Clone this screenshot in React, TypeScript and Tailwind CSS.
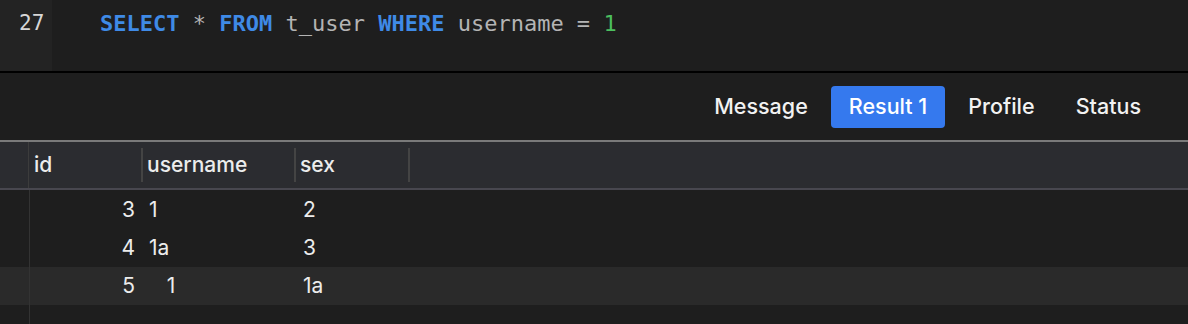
import React from 'react';

const mono = { fontFamily: '"DejaVu Sans Mono", monospace' };

const tabs = ['Message', 'Result 1', 'Profile', 'Status'];

const rows = [
  { id: '3', username: '1', sex: '2' },
  { id: '4', username: '1a', sex: '3' },
  { id: '5', username: '\u00a0\u00a0\u00a01', sex: '1a' },
];

const App: React.FC = () => {
  return (
    <div className="w-[1188px] h-[324px] bg-[#1e1e1e] overflow-hidden font-['Inter',sans-serif] text-[#ececec]">
      {/* editor */}
      <div className="flex h-[71px]">
        <div className="w-[52px] bg-[#232323] text-[#d6d6d6] text-[21px] pt-[8px] pl-[19px]" style={mono}>27</div>
        <div className="flex-1 pl-[48px] pt-[7px] text-[22px] whitespace-pre text-[#b4b4b4]" style={mono}>
          <span className="text-[#3f8ae6] font-bold">SELECT</span> * <span className="text-[#3f8ae6] font-bold">FROM</span> t_user{' '}
          <span className="text-[#3f8ae6] font-bold">WHERE</span> username = <span className="text-[#4cbf5e]">1</span>
        </div>
      </div>
      <div className="h-[2px] bg-black" />

      {/* tabs */}
      <div className="flex justify-end items-center h-[67px] pr-[29px] gap-[5px]">
        {tabs.map((t) => (
          <div
            key={t}
            className={`h-[42px] px-[18px] flex items-center text-[21.5px] font-medium rounded-[4px] ${
              t === 'Result 1' ? 'bg-[#3579ee] text-white' : 'text-[#f2f2f2]'
            }`}
          >
            {t}
          </div>
        ))}
      </div>

      {/* table */}
      <div className="h-[2px] bg-[#7a7a7a]" />
      <div className="flex h-[46px] bg-[#2b2c30] items-center text-[21px] font-medium">
        <div className="w-[29px] self-stretch border-r border-[#3c3c3c]" />
        <div className="w-[114px] h-[34px] flex items-center pl-[5px] border-r-2 border-[#444]">id</div>
        <div className="w-[153px] h-[34px] flex items-center pl-[4px] border-r-2 border-[#444]">username</div>
        <div className="w-[114px] h-[34px] flex items-center pl-[4px] border-r-2 border-[#444]">sex</div>
      </div>
      <div className="h-[2px] bg-[#48474f]" />
      <div className="relative text-[21px]">
        <div className="absolute left-[29px] top-0 w-px h-[200px] bg-[#333]" />
        <div className="h-[1px]" />
        {rows.map((r, i) => (
          <div key={r.id} className={`flex items-center h-[38px] ${i === 2 ? 'bg-[#2a2a2a]' : ''}`}>
            <div className="w-[30px]" />
            <div className="w-[113px] text-right pr-[8px]">{r.id}</div>
            <div className="w-[153px] pl-[6px] whitespace-pre">{r.username}</div>
            <div className="w-[114px] pl-[7px]">{r.sex}</div>
          </div>
        ))}
      </div>
    </div>
  );
};

export default App;
